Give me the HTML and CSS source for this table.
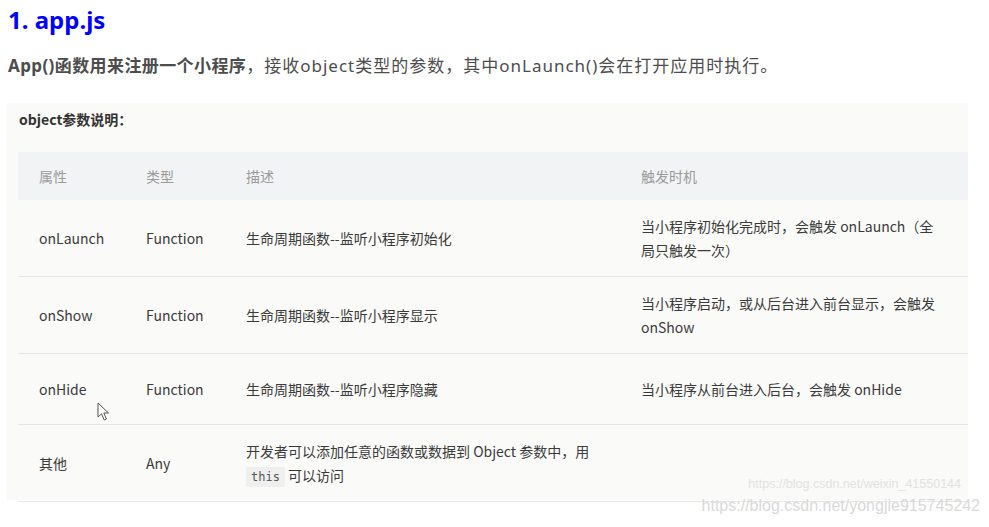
FILE: index.html
```html
<!DOCTYPE html>
<html lang="zh-CN">
<head>
    <meta charset="UTF-8">
    <title>app.js</title>
    <link rel="stylesheet" href="styles.css">
</head>
<body>

    <div id="article">
        <h2 class="title">1. app.js</h2>
        <p class="intro"><strong>App()函数用来注册一个小程序</strong>，接收object类型的参数，其中onLaunch()会在打开应用时执行。</p>

        <div class="shot">
            <div class="shot-caption">object参数说明：</div>
            <div class="param-table">
                <div class="row row-head">
                    <div class="cell">属性</div>
                    <div class="cell">类型</div>
                    <div class="cell">描述</div>
                    <div class="cell">触发时机</div>
                </div>
                <div class="row">
                    <div class="cell">onLaunch</div>
                    <div class="cell">Function</div>
                    <div class="cell">生命周期函数--监听小程序初始化</div>
                    <div class="cell">当小程序初始化完成时，会触发 onLaunch（全局只触发一次）</div>
                </div>
                <div class="row">
                    <div class="cell">onShow</div>
                    <div class="cell">Function</div>
                    <div class="cell">生命周期函数--监听小程序显示</div>
                    <div class="cell">当小程序启动，或从后台进入前台显示，会触发 onShow</div>
                </div>
                <div class="row row-short">
                    <div class="cell">onHide</div>
                    <div class="cell">Function</div>
                    <div class="cell">生命周期函数--监听小程序隐藏</div>
                    <div class="cell">当小程序从前台进入后台，会触发 onHide</div>
                </div>
                <div class="row">
                    <div class="cell">其他</div>
                    <div class="cell">Any</div>
                    <div class="cell">开发者可以添加任意的函数或数据到 Object 参数中，用 <code>this</code> 可以访问</div>
                    <div class="cell"></div>
                </div>
            </div>

            <!-- mouse pointer captured in the screenshot -->
            <svg class="cursor" width="14" height="20" viewBox="0 0 14 20">
                <path d="M1 1 L1 15 L4.5 11.8 L7.2 18 L9.4 17 L6.8 11 L11.5 11 Z" fill="#fff" stroke="#555" stroke-width="1" stroke-linejoin="round"/>
            </svg>
            <span class="mark mark-inner">https://blog.csdn.net/weixin_41550144</span>
        </div>
        <span class="mark mark-outer">https://blog.csdn.net/yongjie915745242</span>
    </div>

</body>
</html>
```

FILE: styles.css
```css
body {
    margin: 0;
    background: #fff;
    font-family: "Noto Sans", "Noto Sans CJK SC", sans-serif;
}
#article {
    position: relative;
    padding: 0 8px;
    height: 527px;
    overflow: hidden;
}
.title {
    margin: 0;
    padding-top: 4px;
    height: 36px;
    font-size: 24px;
    line-height: 32px;
    font-weight: bold;
    color: #0000ff;
}
.intro {
    margin: 0;
    padding-top: 13px;
    height: 50px;
    font-size: 17px;
    line-height: 26px;
    letter-spacing: 1px;
    color: #4d4d4d;
}
.intro strong {
    letter-spacing: 0.4px;
    color: #4d4d4d;
}
.shot {
    position: relative;
    margin-left: -1px;
    width: 961px;
    height: 397px;
    background: #fafaf9;
    font-family: "Noto Sans CJK SC", "Noto Sans", sans-serif;
}
.shot-caption {
    padding: 6px 0 0 12px;
    height: 43px;
    font-size: 14px;
    line-height: 20px;
    font-weight: bold;
    color: #333;
}
.param-table {
    margin-left: 11px;
    width: 950px;
}
.row {
    display: grid;
    grid-template-columns: 107px 100px 395px 348px;
    align-items: center;
    height: 76px;
    border-bottom: 1px solid #e6e6e6;
    font-size: 14px;
    line-height: 24px;
    color: #3a3a3a;
}
.row-head {
    height: 48px;
    border-bottom: none;
    background: #f2f3f5;
    color: #9a9a9a;
}
.row-short {
    height: 70px;
}
.cell {
    padding-left: 21px;
    padding-right: 26px;
}
.cell code {
    display: inline-block;
    padding: 0 5px;
    background: #efefef;
    font-family: "DejaVu Sans Mono", monospace;
    font-size: 12px;
    line-height: 20px;
    color: #555;
}
.cursor {
    position: absolute;
    left: 90px;
    top: 299px;
}
.mark {
    position: absolute;
    font-family: "Liberation Sans", Arial, sans-serif;
    white-space: nowrap;
}
.mark-inner {
    right: 7px;
    top: 374px;
    font-size: 12.5px;
    color: #e2e2e2;
}
.mark-outer {
    right: 9px;
    top: 497px;
    font-size: 16px;
    color: #d9d9d9;
}
```
